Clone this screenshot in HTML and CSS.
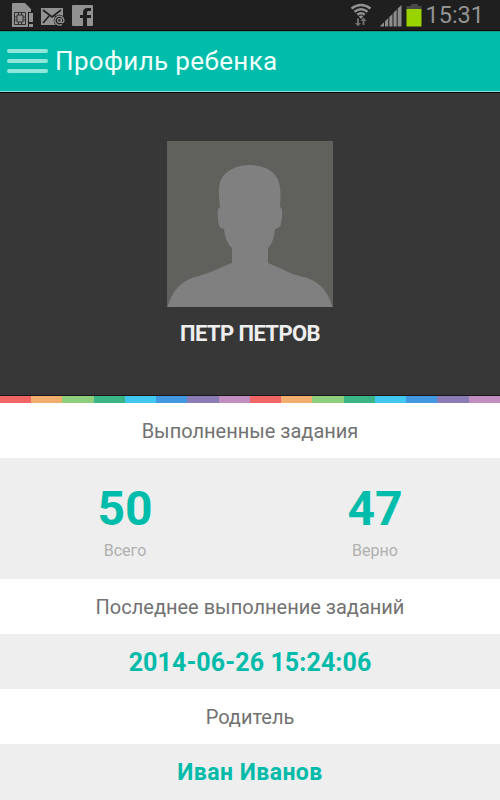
FILE: index.html
```html
<!DOCTYPE html>
<html lang="ru">
<head>
  <meta charset="UTF-8" />
  <title>Профиль ребенка</title>
  <link rel="stylesheet" href="styles.css">
</head>
<body>

  <div class="status-bar">
    <svg class="status-left" width="96" height="31" viewBox="0 0 96 31">
      <!-- SIM card -->
      <path d="M13 3h12l6 6v3h-3v15H12V4q0-1 1-1z" fill="#929292" />
      <path d="M14.500 12.500h11v12h-11z" fill="none" stroke="#303030" />
      <path d="M17 15h6v7h-6zM14.500 17H17M14.500 20H17M23 17h2.500M23 20h2.500M18.500 12v3M21.500 12v3M18.500 22v3M21.500 22v3" fill="none" stroke="#303030" />
      <path d="M29 13h4v9h-4zM29 24h4v3h-4z" fill="#929292" />
      <!-- Mail -->
      <path d="M41 8h22v17H41z" fill="#929292" />
      <path d="M43 10l9 7 9-7M43 23l6-7M61 23l-6-7" fill="none" stroke="#1f1f1f" stroke-width="1.6" />
      <circle cx="59.5" cy="20.5" r="5.8" fill="#1f1f1f" />
      <circle cx="59.5" cy="20.5" r="1.9" fill="none" stroke="#929292" stroke-width="1.3" />
      <path d="M61.4 18.5v2.8q0 1.5 1.3 1.3q1.4-.5 1.2-2.6a4.5 4.500 0 1 0-2 4.4" fill="none" stroke="#929292" stroke-width="1.3" />
      <!-- Facebook -->
      <path d="M73 5h19q1 0 1 1v19q0 1-1 1h-5v-8h4v-3h-4v-2.500q0-1.500 1.500-1.500H91V8h-3.500q-4.500 0-4.500 4.500V15h-3v3h3v8H73q-1 0-1-1V6q0-1 1-1z" fill="#929292" />
    </svg>
    <div class="status-right">
      <svg width="74" height="31" viewBox="0 0 74 31">
        <!-- Wi-Fi -->
        <path d="M1.500 8.500q9.500-7 19 0M4.500 11.700q6.500-5 13 0M7.300 14.700q3.700-3 7.400 0" fill="none" stroke="#929292" stroke-width="2.500" />
        <path d="M8.800 16.200q2.200-1.400 4.400 0L11 19z" fill="#929292" />
        <path d="M7 18.500h2V23h2l-3 3.500L5 23h2z" fill="#707070" />
        <path d="M12.500 25h2v-4h2L13.500 17.500l-3 3.500h2z" fill="#707070" />
        <!-- Signal -->
        <path d="M30.500 26.500v-1l3.500-3.200v4.200zM35 26.500v-5.200l3.200-3.200v8.400zM39.300 26.500v-9.400l3.200-3.200v12.600zM43.500 26.500V12.800l3.200-3.200v16.900zM47.700 26.500V8.600L51.500 5v21.500z" fill="#8c8c8c" />
        <!-- Battery -->
        <path d="M61 4h7v2h3.500v3h-15V6H61z" fill="#484848" />
        <path d="M56.500 9h15v17.500h-15z" fill="#99d400" />
      </svg>
      <span class="clock">15:31</span>
    </div>
  </div>

  <header class="app-bar">
    <div class="menu-icon">
      <span></span>
      <span></span>
      <span></span>
    </div>
    <h1>Профиль ребенка</h1>
  </header>

  <div class="profile">
    <svg class="avatar" width="166" height="166" viewBox="0 0 166 166">
      <path d="M0 0h166v166H0z" fill="#60605d" />
      <path d="M0.500 166C5 149 16 138 32 135C43 132 54 126 65 122V107Q58 101 57 88C52 87 51 84 51 76C50 69 51 67 53 66C51 50 51 40 58 33Q67 24 83 24T107 33C114 40 114 50 113 66C115 67 115.500 69 115 76C114 84 114 87 108 88Q107 101 101 107V122C112 126 123 133 134 135.500C150 138 161 149 165.500 166z" fill="#808080" />
    </svg>
    <div class="child-name">ПЕТР ПЕТРОВ</div>
  </div>

  <div class="rainbow"></div>

  <h2 class="section-title">Выполненные задания</h2>
  <div class="stats">
    <div class="stat">
      <div class="stat-value">50</div>
      <div class="stat-label">Всего</div>
    </div>
    <div class="stat">
      <div class="stat-value">47</div>
      <div class="stat-label">Верно</div>
    </div>
  </div>

  <h2 class="section-title">Последнее выполнение заданий</h2>
  <div class="section-value date">2014-06-26 15:24:06</div>

  <h2 class="section-title">Родитель</h2>
  <div class="section-value parent">Иван Иванов</div>

</body>
</html>
```
FILE: styles.css
```css
* {
  box-sizing: border-box;
}

body {
  font-family: Roboto, sans-serif;
  margin: 0;
  background-color: #eeeeee;
  height: 800px;
  overflow: hidden;
}

/* Status bar */
.status-bar {
  display: flex;
  justify-content: space-between;
  height: 31px;
  background-color: #1f1f1f;
  border-bottom: 1px solid #180505;
}

.status-right {
  display: flex;
  padding-right: 16px;
}

.clock {
  width: 60px;
  color: #929292;
  font-size: 23.5px;
  font-weight: 400;
  line-height: 31px;
  text-align: right;
}

/* App bar */
.app-bar {
  display: flex;
  align-items: center;
  height: 62px;
  padding: 0 7px 2px;
  background-color: #00bdab;
  border-top: 1px solid #0e9c8d;
  border-bottom: 1px solid #000000;
  box-shadow: inset 0 -1px 0 #8adfd5;
}

.menu-icon {
  display: flex;
  flex-direction: column;
  gap: 6px;
  width: 41px;
  margin-right: 7px;
}

.menu-icon span {
  height: 4px;
  border-radius: 2px;
  background-color: #8fe7dc;
}

.app-bar h1 {
  margin: 0;
  color: #effffc;
  font-size: 26px;
  font-weight: 400;
  letter-spacing: 0.36px;
}

/* Profile */
.profile {
  display: flex;
  flex-direction: column;
  align-items: center;
  height: 303px;
  padding-top: 48px;
  background-color: #373737;
  border-bottom: 1px solid #1c171c;
}

.child-name {
  margin-top: 14px;
  color: #eeeeee;
  font-size: 22px;
  font-weight: 700;
  line-height: 26px;
  letter-spacing: -0.6px;
}

.rainbow {
  height: 7px;
  background: linear-gradient(90deg,
    #f26565 12.5%, #f1ae6c 12.5% 25%,
    #8ecf7b 25% 37.5%, #3bb488 37.5% 50%,
    #40c8f0 50% 62.5%, #4299e1 62.5% 75%,
    #8a7cb4 75% 87.5%, #c18dbf 87.5%);
  background-size: 250px 7px;
}

/* Sections */
.section-title {
  height: 55px;
  margin: 0;
  background-color: #ffffff;
  color: #727272;
  font-size: 20px;
  font-weight: 400;
  line-height: 56px;
  text-align: center;
}

.stats {
  display: flex;
  height: 121px;
  padding-top: 23px;
}

.stat {
  flex: 1;
  text-align: center;
}

.stat-value {
  color: #00bdab;
  font-size: 48px;
  font-weight: 700;
  line-height: 56px;
}

.stat-label {
  margin-top: 4px;
  color: #b0b0b0;
  font-size: 16px;
  line-height: 20px;
}

.section-value {
  height: 55px;
  color: #00bba9;
  font-weight: 700;
  line-height: 58px;
  text-align: center;
}

.date {
  font-size: 25px;
  letter-spacing: 0.1px;
}

.parent {
  font-size: 23px;
  letter-spacing: 0.45px;
}
```
